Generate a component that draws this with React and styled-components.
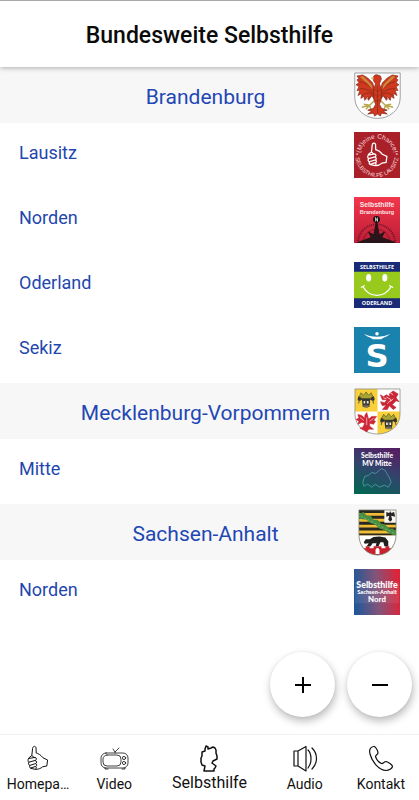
import React from "react";
import styled, { createGlobalStyle, css } from "styled-components";

const Global = createGlobalStyle`
  *, *::before, *::after { box-sizing: border-box; }
  body { margin: 0; background: #fff; color: #0b0b0b; font-family: Roboto, "Liberation Sans", sans-serif; }
  h1, h2, ul { margin: 0; padding: 0; font: inherit; }
  ul { list-style: none; }
  svg { display: block; }
`;

const Page = styled.div`
  display: flex;
  flex-direction: column;
  min-height: 100vh;
`;

const Header = styled.header`
  position: relative;
  display: flex;
  align-items: center;
  justify-content: center;
  height: 67px;
  padding-top: 4px;
  border-top: 1px solid #a9a9a9;
  background: #fff;
  box-shadow: 0 1px 5px rgba(0, 0, 0, 0.3);
`;

const Title = styled.h1`
  font-size: 23px;
  line-height: 28px;
  font-weight: 500;
`;

const Main = styled.main`
  flex: 1;
`;

const RegionHeader = styled.div`
  display: grid;
  grid-template-columns: 1fr auto 1fr;
  align-items: center;
  height: 56px;
  padding: 0 18px 0 10px;
  background: #f7f7f7;
`;

const RegionName = styled.h2`
  grid-column: 2;
  padding-top: 3px;
  color: #1f47b4;
  font-size: 21px;
  line-height: 26px;
`;

const Crest = styled.svg`
  justify-self: end;
  width: 47px;
  height: 47px;
`;

const GroupLink = styled.a`
  display: flex;
  justify-content: space-between;
  height: 65px;
  padding: 9px 19px;
  color: #1f47ae;
  font-size: 18px;
  line-height: 42px;
  text-decoration: none;
`;

const Logo = styled.svg`
  width: 46px;
  height: 46px;
  overflow: visible;
  font-family: "Open Sans", "Noto Sans", sans-serif;
  font-weight: 700;
`;

const Bottom = styled.div`
  position: sticky;
  bottom: 0;
`;

const Zoom = styled.div`
  display: flex;
  justify-content: flex-end;
  gap: 12px;
  padding: 0 7px 17px;
`;

const RoundButton = styled.button`
  display: grid;
  place-items: center;
  width: 65px;
  height: 65px;
  padding: 0;
  border: 0;
  border-radius: 50%;
  background: #fff;
  box-shadow: 1px 4px 8px rgba(0, 0, 0, 0.28), 0 0 3px rgba(0, 0, 0, 0.06);
`;

const TabBar = styled.nav`
  display: grid;
  grid-template-columns: 2fr 2fr 3fr 2fr 2fr;
  height: 66px;
  border-top: 1px solid #f0f0f0;
  background: #fff;
`;

const Tab = styled.a`
  display: flex;
  flex-direction: column;
  align-items: center;
  padding-top: 9px;
  color: #111;
  font-size: 14px;
  line-height: 20px;
  text-decoration: none;
  white-space: nowrap;
  ${(p) =>
    p.$active &&
    css`
      font-size: 16px;
      line-height: 18px;
    `}
`;

const TabIcon = styled.svg`
  width: 30px;
  height: 30px;
  fill: none;
  stroke: #111;
  stroke-width: 1.2;
  stroke-linejoin: round;
  stroke-linecap: round;
`;

const ThumbShape = () => (
  <>
    <path d="M5.5 14.5C6 13 8 12.5 8.8 11.5L9.6 4.5C9.8 2 12.4 1.6 13 3.6L13.2 9C15 9.4 18 11 20 13.8L24.6 16 23.8 22 19.6 22.8C18 24.4 15 25.4 12.6 25.4L8 24.4C6.6 23.8 6.4 22.6 6.8 21.6 5.6 20.8 5.2 19.4 5.8 18.4 4.8 17.2 4.8 15.6 5.5 14.5z" />
    <path d="M5.5 14.5 12 13.4C13.8 13.8 13.8 15.8 12.4 16.4L5.8 18.2M12.4 16.6C14.2 17 14 19 12.8 19.5L6.8 21.4M12.8 19.7C14.4 20.2 14 22 12.8 22.4L7.6 24M8.8 11.5 11 13.4M12.8 22.6C13.8 23.2 13.6 24.8 12.6 25.2" />
  </>
);

const Wing = () => (
  <g>
    <path d="M21 17 19 11 14 6 9 3 3 4 5 7 3 8 5 11 2 13 5 15 3 19 6 19 4 24 8 22 7 27 10 25 11 29 14 25 15 29 18 24 20 27 22 22z" fill="#d0381f" stroke="#7d2415" strokeWidth=".6" />
    <path d="M20 20C17 15 13 11 6 10M20 22C15 18 12 17 6 17M19 23C14 20 12 22 8 24M19 24 13 28" fill="none" stroke="#7c2818" strokeWidth=".7" />
    <path d="M6 5 9 4 13 8 18 13 19 18 14 12z" fill="#c98b3b" />
    <path d="M21 29 16 34 10 33M16 34 8 36M16 34 12 38M16 34 17 38" fill="none" stroke="#b9a94e" strokeWidth="1.5" />
  </g>
);

const Brandenburg = () => (
  <Crest viewBox="0 0 48 48" role="img" aria-label="Wappen Brandenburg">
    <path d="M.8 1H47.2V26C47.2 39 36 47.4 24 47.4S.8 39 .8 26z" fill="#fff" stroke="#81898a" strokeWidth=".8" />
    <Wing />
    <g transform="translate(48 0) scale(-1 1)"><Wing /></g>
    <path d="M24 3C20 2 19 6 20 9L22 12 20 18 20 27 22 33 20 37 14 39 18 40 14 43 20 42 21 45 24 43 27 45 28 42 34 43 30 40 34 39 28 37 26 33 28 27 28 18 26 12 28 7 27 4z" fill="#d0381f" stroke="#7b2517" strokeWidth=".7" />
    <path d="M20 5 17 6 20 8z" fill="#d7b14b" />
    <path d="M24 14V42M21 18 24 20 27 18M21 23 24 25 27 23M21 28 24 30 27 28" fill="none" stroke="#842819" strokeWidth=".6" />
  </Crest>
);

const BullHead = () => (
  <g>
    <path d="M3 5 5 1 8 4 11 0 14 4 17 1 19 5 16 8H6z" fill="#a8a431" stroke="#5b5724" strokeWidth=".8" />
    <path d="M2 5C-1 12 3 12 6 9L7 18H15L16 9C20 12 23 11 20 5L16 8H6z" fill="#353530" />
    <path d="M8 11H10V14H8zM12 11H14V14H12z" fill="#ececdf" />
    <path d="M7 16H15L13 19H9z" fill="#7b745d" />
    <path d="M3 10 2 14M19 10 20 14M11 10V17" stroke="#55554b" strokeWidth="1.2" />
  </g>
);

const Mecklenburg = () => (
  <Crest viewBox="0 0 48 48" role="img" aria-label="Wappen Mecklenburg-Vorpommern">
    <path d="M1 1H47V27C47 39 36 47 24 47S1 39 1 27z" fill="#fff" />
    <path d="M1 1H24V24H1zM24 24H47V27C47 39 36 47 24 47z" fill="#fad03a" />
    <path d="M1 1H47V27C47 39 36 47 24 47S1 39 1 27z" fill="none" stroke="#8b8d83" strokeWidth=".8" />
    <g transform="translate(3 4)scale(.85)"><BullHead /></g>
    <g transform="translate(26 26)scale(.85)"><BullHead /></g>
    <path d="M40 3 36 6 37 9 33 7 30 9 27 7 29 12 34 12 31 15 27 14 29 18 33 17 29 22 34 22 36 18 40 22 43 20 39 17 43 13 46 14 43 10 45 6z" fill="#ce2636" stroke="#b31e2c" strokeWidth=".6" />
    <path d="M37 5 40 7M33 9 38 12 34 16M40 11 37 14M30 10 33 11" fill="none" stroke="#fff" strokeWidth=".7" />
    <path d="M13 25 11 28 11 31 8 28 4 27 5 31 2 32 5 34 4 37 8 35 11 36 9 40 6 41 10 43 13 45 15 42 20 42 16 39 16 36 20 37 22 34 20 33 23 29 18 29 15 32z" fill="#ce2636" stroke="#ce2636" strokeWidth=".6" />
    <path d="M13 30V38M6 30 10 33M20 31 16 34" fill="none" stroke="#fff" strokeWidth=".6" />
  </Crest>
);

const SachsenAnhalt = () => (
  <Crest viewBox="0 0 48 48" role="img" aria-label="Wappen Sachsen-Anhalt">
    <clipPath id="anhalt"><path d="M5 1H43V26C43 39 34 47 24 47S5 39 5 26z" /></clipPath>
    <g clipPath="url(#anhalt)">
      <path d="M5 1H43V47H5z" fill="#f1bd36" />
      <path d="M5 1H43V4H5zM5 7H43V10H5zM5 13H43V16H5zM5 19H43V22H5zM5 25H43V27H5z" fill="#282720" />
      <path d="M5 5 10 3 13 7 17 7 20 11 24 11 28 15 32 16 36 20 40 20 43 23V28L36 25 32 22 26 20 22 16 16 14 13 11 5 10z" fill="#479043" />
      <path d="M7 7 41 25" stroke="#83b364" strokeWidth="1" strokeDasharray="2 2" />
      <path d="M31 1H43V14H31z" fill="#f8f8ef" />
      <path d="M37 2 36 4 33 3 33 8 36 7 35 11 37 13 39 11 38 7 42 8 41 3 38 4z" fill="#262626" />
      <path d="M5 27H43V47H5z" fill="#fff" />
      <path d="M5 38H9V40H12V38H16V40H20V38H28V40H32V38H36V40H39V38H43V47H5z" fill="#c9222d" />
      <path d="M22 46V42C22 39 26 39 26 42V46z" fill="#fff" />
      <path d="M10 34 12 31 16 31 20 28.500 26 28 32 29 35 33 35 38H31L30 34 27 34 25 38H22L23 35 19 35 17 38H13L15 35 11 35.500z" fill="#20201e" />
    </g>
    <path d="M5 1H43V26C43 39 34 47 24 47S5 39 5 26z" fill="none" stroke="#7b817a" strokeWidth=".8" />
  </Crest>
);

const Lausitz = () => (
  <Logo viewBox="0 0 47 47" aria-hidden="true">
    <defs>
      <path id="lausTop" d="M13 37A17 17 0 1 1 34 37" />
      <path id="lausLow" d="M5 12A22 22 0 1 0 42 12" />
    </defs>
    <path d="M0 0H47V47H0z" fill="#aa2029" />
    <g fill="#f8dcdc" fontFamily="Liberation Sans" fontWeight="400" textAnchor="middle">
      <text fontSize="6.6"><textPath href="#lausTop" startOffset="50%">*(M)eine Chance!*</textPath></text>
      <text fontSize="5.8"><textPath href="#lausLow" startOffset="50%">SELBSTHILFE LAUSITZ</textPath></text>
    </g>
    <g transform="translate(9 9)" fill="none" stroke="#fff" strokeWidth="1.3"><ThumbShape /></g>
  </Logo>
);

const BrandenburgNorden = () => (
  <Logo viewBox="0 0 47 47" aria-hidden="true">
    <defs><linearGradient id="redFade" x2="0" y2="1"><stop stopColor="#f3364c" /><stop offset="1" stopColor="#bd1e36" /></linearGradient></defs>
    <path d="M0 0H47V47H0z" fill="url(#redFade)" />
    <g fill="none" stroke="#6d1729"><path d="M4 47A19 19 0 0 1 42 47" strokeWidth="2" strokeDasharray="1 1" /><path d="M9 47A14 14 0 0 1 37 47" strokeWidth=".8" /></g>
    <path d="M22 26H24L26 38 32 35 29 41 42 46V47H4V46L17 41 14 35 20 38z" fill="#281419" />
    <circle cx="23" cy="23" r="3.5" fill="#171315" />
    <path d="M22 25V21L24 25V21" fill="none" stroke="#fff" strokeWidth=".7" />
    <g fill="#ffe5e7" fontFamily="Liberation Sans" fontWeight="700" textAnchor="middle"><text x="23.5" y="10" fontSize="7">Selbsthilfe</text><text x="23.5" y="17" fontSize="5.6">Brandenburg</text></g>
  </Logo>
);

const Oderland = () => (
  <Logo viewBox="0 0 47 47" aria-hidden="true">
    <path d="M0 0H47V47H0z" fill="#192b76" />
    <path d="M0 10H47V37H0z" fill="#98c91d" />
    <g fill="#fff" fontSize="5.6" textAnchor="middle"><text x="23.5" y="7.2">SELBSTHILFE</text><text x="23.5" y="44">ODERLAND</text></g>
    <g fill="#fff"><ellipse cx="15" cy="16" rx="2.6" ry="3.8" /><ellipse cx="31.5" cy="16" rx="2.6" ry="3.8" /></g>
    <path d="M9 25C16 37 31 37 38 25M7 26 11 24M36 24 40 26" fill="none" stroke="#fff" strokeWidth="1.3" />
  </Logo>
);

const Sekiz = () => (
  <Logo viewBox="0 0 47 47" aria-hidden="true">
    <path d="M0 0H47V47H0z" fill="#1982ad" />
    <text x="23.5" y="41" fontSize="33" fontFamily="DejaVu Sans" fill="#fff" textAnchor="middle">S</text>
    <circle cx="23.5" cy="7" r="1.8" fill="#fff" />
    <path d="M10 7C17 11 30 11 37 7C33 11 29 11 28 12.5H19C18 11 14 11 10 7z" fill="#fff" />
  </Logo>
);

const Mitte = () => (
  <Logo viewBox="0 0 47 47" aria-hidden="true">
    <defs><linearGradient id="mvFade" x1=".7" x2=".3" y2="1"><stop stopColor="#542064" /><stop offset=".5" stopColor="#30466c" /><stop offset="1" stopColor="#076354" /></linearGradient></defs>
    <path d="M0 0H47V47H0z" fill="url(#mvFade)" />
    <g fill="#fff" fontFamily="Lato" fontSize="7" fontWeight="900" textAnchor="middle"><text x="23.5" y="10">Selbsthilfe</text><text x="23.5" y="18">MV Mitte</text></g>
    <path d="M9 35 11 29 15 28 18 25 22 26 28 21 32 23 34 27 36 30 38 35 35 40 31 38 26 40 22 37 18 40 14 37 10 39z" fill="none" stroke="#4f99a3" strokeWidth=".9" />
  </Logo>
);

const SachsenNorden = () => (
  <Logo viewBox="0 0 47 47" aria-hidden="true">
    <defs><linearGradient id="nordFade" y1=".5" y2=".4"><stop stopColor="#205799" /><stop offset=".5" stopColor="#835479" /><stop offset="1" stopColor="#e02237" /></linearGradient></defs>
    <path d="M0 0H47V47H0z" fill="url(#nordFade)" />
    <path d="M1 13H46V35H1z" fill="#fff" opacity=".08" />
    <g fill="#fff" fontFamily="Lato" fontWeight="900" textAnchor="middle"><text x="23.5" y="19" fontSize="9">Selbsthilfe</text><text x="23.5" y="26" fontSize="5.8">Sachsen-Anhalt</text><text x="23.5" y="34" fontSize="8">Nord</text></g>
  </Logo>
);

const regions = [
  { name: "Brandenburg", crest: Brandenburg, groups: [["Lausitz", Lausitz], ["Norden", BrandenburgNorden], ["Oderland", Oderland], ["Sekiz", Sekiz]] },
  { name: "Mecklenburg-Vorpommern", crest: Mecklenburg, groups: [["Mitte", Mitte]] },
  { name: "Sachsen-Anhalt", crest: SachsenAnhalt, groups: [["Norden", SachsenNorden]] },
];

const tabs = [
  { label: "Homepa…", icon: <g strokeWidth="1"><ThumbShape /></g> },
  { label: "Video", icon: <g strokeWidth=".8"><rect x="2" y="9" width="27" height="15" rx="5" /><rect x="4" y="11" width="18" height="11" rx="4" /><path d="M14 5 16 8 20 4M16 8V9M6 24V25H9M23 25H26V24" /><circle cx="25" cy="14" r="1.6" /><circle cx="25" cy="19" r="1.6" /></g> },
  { label: "Selbsthilfe", active: true, icon: <path strokeWidth="1.5" d="M12 2 14 3 14 5 17 4 19 3 21 4 22 6 22 9 23 12 23 15 19 17 18 19 22 22 21 24 20 25 20 27 10 27 11 22 8 21 7 18 7 14 8 12 8 8 11 7 11 5z" /> },
  { label: "Audio", icon: <path d="M4 7H8V22H4zM8 7 16 2.500V27L8 22M18 6C22 10 22 19 18 24M22 4C28 10 28 19 22 25" /> },
  { label: "Kontakt", icon: <path d="M7.500 2.500C4 3 3 6 4 10 6 18 13 26 20 26.500 23 26.500 26 24.500 26.500 22.500 26.500 20.500 22 18 20 17.500 18 17.500 17 20 15.500 19.500 13 18.500 10.500 15.500 9.500 12.500 9.500 11 12 10.500 12 9 12 7 9.500 2 7.500 2.500z" /> },
];

export default function App() {
  return (
    <Page>
      <Global />
      <Header><Title>Bundesweite Selbsthilfe</Title></Header>
      <Main>
        {regions.map(({ name, crest: RegionCrest, groups }) => (
          <section key={name}>
            <RegionHeader><RegionName>{name}</RegionName><RegionCrest /></RegionHeader>
            <ul>
              {groups.map(([group, GroupLogo]) => (
                <li key={group}><GroupLink href="#">{group}<GroupLogo /></GroupLink></li>
              ))}
            </ul>
          </section>
        ))}
      </Main>
      <Bottom>
        <Zoom>
          <RoundButton type="button" aria-label="Vergrößern"><svg width="18" height="18" stroke="#000" strokeWidth="2"><path d="M1 9H17M9 1V17" /></svg></RoundButton>
          <RoundButton type="button" aria-label="Verkleinern"><svg width="18" height="18" stroke="#000" strokeWidth="2"><path d="M1 9H17" /></svg></RoundButton>
        </Zoom>
        <TabBar>
          {tabs.map(({ label, icon, active }) => (
            <Tab href="#" key={label} $active={active} aria-current={active ? "page" : undefined}>
              <TabIcon viewBox="0 0 30 30" aria-hidden="true">{icon}</TabIcon>{label}
            </Tab>
          ))}
        </TabBar>
      </Bottom>
    </Page>
  );
}
